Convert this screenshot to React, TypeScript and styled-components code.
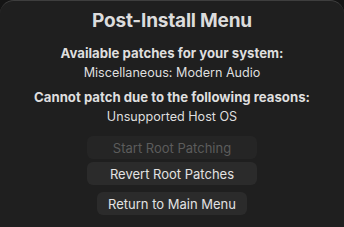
import React from "react";
import styled, { createGlobalStyle } from "styled-components";

const Global = createGlobalStyle`
  html, body { margin: 0; padding: 0; background: #141414; }
  body { width: 344px; height: 227px; overflow: hidden; font-family: Inter, "Noto Sans", sans-serif; -webkit-font-smoothing: antialiased; }
`;

const Window = styled.div`
  box-sizing: border-box;
  width: 344px;
  height: 227px;
  background: #1f1f1f;
  border-top: 1px solid #3e3e3e;
  border-radius: 14px 14px 0 0;
  display: flex;
  flex-direction: column;
  align-items: center;
  color: #dedede;
  padding-top: 8px;
`;

const Title = styled.h1`
  margin: 0;
  font-size: 19px;
  font-weight: 700;
  letter-spacing: -0.2px;
  line-height: 24px;
  color: #dcdcdc;
`;

const Heading = styled.div<{ $mt: number }>`
  margin-top: ${(p) => p.$mt}px;
  font-size: 13.2px;
  font-weight: 700;
  line-height: 16px;
  color: #dedede;
`;

const Line = styled.div`
  margin-top: 4px;
  font-size: 12.6px;
  font-weight: 400;
  line-height: 16px;
  color: #dedede;
`;

const Buttons = styled.div`
  margin-top: 11px;
  display: flex;
  flex-direction: column;
  align-items: center;
`;

const Button = styled.button<{ $w: number; $mt: number }>`
  box-sizing: border-box;
  width: ${(p) => p.$w}px;
  height: 23px;
  margin-top: ${(p) => p.$mt}px;
  border: none;
  border-radius: 6px;
  background: #2b2b2b;
  color: #e2e2e2;
  font-family: Inter, "Noto Sans", sans-serif;
  font-size: 13px;
  padding: 0;
  &:disabled {
    background: #252525;
    color: #5c5c5c;
  }
`;

export default function App() {
  return (
    <>
      <Global />
      <Window>
        <Title>Post-Install Menu</Title>
        <Heading $mt={12}>Available patches for your system:</Heading>
        <Line>Miscellaneous: Modern Audio</Line>
        <Heading $mt={8}>Cannot patch due to the following reasons:</Heading>
        <Line>Unsupported Host OS</Line>
        <Buttons>
          <Button $w={170} $mt={0} disabled>Start Root Patching</Button>
          <Button $w={170} $mt={3}>Revert Root Patches</Button>
          <Button $w={150} $mt={7}>Return to Main Menu</Button>
        </Buttons>
      </Window>
    </>
  );
}
